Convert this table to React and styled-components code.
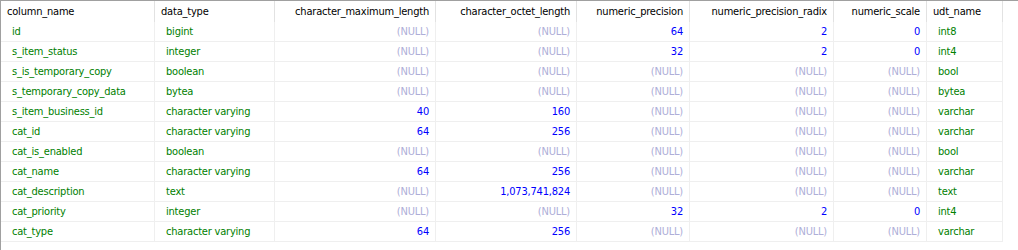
import React from "react";
import styled, { createGlobalStyle } from "styled-components";

const GlobalStyle = createGlobalStyle`
  html, body { margin: 0; padding: 0; background: #ffffff; }
  #root { width: 1018px; height: 250px; overflow: hidden; }
`;

const Frame = styled.div`
  box-sizing: border-box;
  width: 1018px;
  height: 250px;
  border-top: 1px solid #a0a0a0;
  border-left: 1px solid #a0a0a0;
  background: #ffffff;
  font-family: "DejaVu Sans Condensed", "Liberation Sans", sans-serif;
  font-size: 11px;
  letter-spacing: -0.2px;
`;

const Grid = styled.div`
  display: grid;
  grid-template-columns: 154px 120px 161px 141px 113px 144px 93px 76px;
  width: max-content;
`;

const HeaderCell = styled.div`
  box-sizing: border-box;
  height: 21px;
  display: flex;
  align-items: center;
  justify-content: ${(p) => (p.$right ? "flex-end" : "flex-start")};
  padding: ${(p) => (p.$right ? "0 6px 1px 0" : "0 0 1px 6px")};
  border-right: 1px solid #e2e2e2;
  color: #000000;
  white-space: nowrap;
  overflow: hidden;
`;

const colors = {
  name: "#008000",
  type: "#008000",
  num: "#0000ff",
  null: "#aeaed8",
};

const Cell = styled.div`
  box-sizing: border-box;
  height: 20px;
  display: flex;
  align-items: center;
  justify-content: ${(p) => (p.$right ? "flex-end" : "flex-start")};
  padding: ${(p) => (p.$right ? "0 6px 0 0" : "0 0 0 11px")};
  border-right: 1px solid #efefef;
  border-bottom: 1px solid #efefef;
  color: ${(p) => colors[p.$kind]};
  white-space: nowrap;
  overflow: hidden;
`;

const headers = [
  ["column_name", false],
  ["data_type", false],
  ["character_maximum_length", true],
  ["character_octet_length", true],
  ["numeric_precision", true],
  ["numeric_precision_radix", true],
  ["numeric_scale", true],
  ["udt_name", false],
];

const N = null;
const rows = [
  ["id", "bigint", N, N, "64", "2", "0", "int8"],
  ["s_item_status", "integer", N, N, "32", "2", "0", "int4"],
  ["s_is_temporary_copy", "boolean", N, N, N, N, N, "bool"],
  ["s_temporary_copy_data", "bytea", N, N, N, N, N, "bytea"],
  ["s_item_business_id", "character varying", "40", "160", N, N, N, "varchar"],
  ["cat_id", "character varying", "64", "256", N, N, N, "varchar"],
  ["cat_is_enabled", "boolean", N, N, N, N, N, "bool"],
  ["cat_name", "character varying", "64", "256", N, N, N, "varchar"],
  ["cat_description", "text", N, "1,073,741,824", N, N, N, "text"],
  ["cat_priority", "integer", N, N, "32", "2", "0", "int4"],
  ["cat_type", "character varying", "64", "256", N, N, N, "varchar"],
];

function renderCell(value, i, key) {
  const right = i >= 2 && i <= 6;
  if (right) {
    return value === null ? (
      <Cell key={key} $right $kind="null">(NULL)</Cell>
    ) : (
      <Cell key={key} $right $kind="num">{value}</Cell>
    );
  }
  return (
    <Cell key={key} $kind={i === 0 ? "name" : "type"}>
      {value}
    </Cell>
  );
}

export default function App() {
  return (
    <>
      <GlobalStyle />
      <Frame>
        <Grid>
          {headers.map(([h, right]) => (
            <HeaderCell key={h} $right={right}>
              {h}
            </HeaderCell>
          ))}
          {rows.map((r, ri) => r.map((v, ci) => renderCell(v, ci, `${ri}-${ci}`)))}
        </Grid>
      </Frame>
    </>
  );
}
